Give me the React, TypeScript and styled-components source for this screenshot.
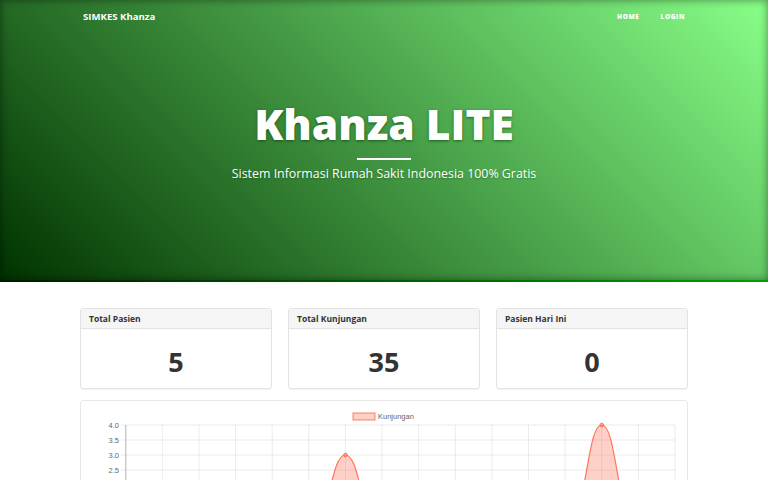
import React from "react";
import styled, { createGlobalStyle } from "styled-components";

const GlobalStyle = createGlobalStyle`
  html, body {
    margin: 0;
    padding: 0;
    background: #fff;
  }
  body {
    font-family: "Open Sans", "Liberation Sans", sans-serif;
    color: #333;
  }
  * {
    box-sizing: border-box;
  }
`;

const Hero = styled.header`
  display: flex;
  flex-direction: column;
  height: 282px;
  background: linear-gradient(45deg, #003300, #88ff88);
  box-shadow: inset 0 0 8px rgba(0, 0, 0, 0.45);
  border-bottom: 2px solid;
  border-image: linear-gradient(to right, #001800, #00a000) 1;
`;

const Nav = styled.nav`
  display: flex;
  justify-content: space-between;
  align-items: center;
  width: 608px;
  height: 32px;
  margin: 0 auto;
  padding: 0 3px;
`;

const Brand = styled.a`
  font-size: 9.6px;
  font-weight: 700;
  color: #fff;
  text-decoration: none;
`;

const NavLinks = styled.ul`
  display: flex;
  gap: 21px;
  margin: 0;
  padding: 0;
  list-style: none;
`;

const NavLink = styled.li`
  font-size: 6.5px;
  font-weight: 800;
  letter-spacing: 0.6px;
  text-transform: uppercase;
  color: #fff;
`;

const HeroBody = styled.div`
  display: flex;
  flex-direction: column;
  align-items: center;
  padding-top: 71px;
  color: #fff;
`;

const HeroTitle = styled.h1`
  margin: 0;
  font-size: 42.5px;
  line-height: 1;
  font-weight: 800;
  text-shadow: 0 1px 3px rgba(0, 70, 0, 0.7);
`;

const Divider = styled.hr`
  width: 54px;
  height: 2px;
  margin: 12px 0 0;
  border: 0;
  background: #fff;
`;

const HeroSubtitle = styled.p`
  margin: 4px 0 0;
  font-size: 12.4px;
  line-height: 20px;
  font-weight: 400;
  text-shadow: 0 1px 2px rgba(0, 60, 0, 0.4);
`;

const Main = styled.main`
  width: 608px;
  margin: 0 auto;
  padding-top: 26px;
`;

const CardGrid = styled.div`
  display: grid;
  grid-template-columns: repeat(3, 1fr);
  gap: 16px;
`;

const Card = styled.div`
  border: 1px solid #e3e3e3;
  border-radius: 3px;
  background: #fff;
  box-shadow: 0 1px 1px rgba(0, 0, 0, 0.05);
  overflow: hidden;
`;

const CardHeader = styled.div`
  height: 20px;
  padding: 0 8px;
  display: flex;
  align-items: center;
  background: #f5f5f5;
  border-bottom: 1px solid #e3e3e3;
  font-size: 8.5px;
  font-weight: 700;
  color: #333;
`;

const CardValue = styled.div`
  display: flex;
  justify-content: center;
  align-items: center;
  height: 59px;
  padding-top: 6px;
  font-size: 27px;
  font-weight: 700;
  color: #333;
`;

const ChartPanel = styled.div`
  margin-top: 11px;
  border: 1px solid #e8e8e8;
  border-radius: 3px;
  background: #fff;
`;

const ChartSvg = styled.svg`
  display: block;
  width: 100%;
  height: 180px;
`;

const labels = [
  "01", "02", "03", "04", "05", "06", "07", "08",
  "09", "10", "11", "12", "13", "14", "15", "16",
];
const data = [0, 0, 0, 0, 0, 0, 3, 0, 0, 0, 0, 0, 0, 4, 0, 0];

const X0 = 44.7;
const STEP = 36.62;
const Y_TOP = 24;
const UNIT = 30;
const MAX = 4;

type Pt = { x: number; y: number };

// chart.js style spline, tension 0.4
function buildPath(points: Pt[]) {
  const t = 0.4;
  const cps = points.map((cur, i) => {
    const prev = points[i - 1] || cur;
    const next = points[i + 1] || cur;
    const d01 = Math.hypot(cur.x - prev.x, cur.y - prev.y);
    const d12 = Math.hypot(next.x - cur.x, next.y - cur.y);
    const sum = d01 + d12 || 1;
    const fa = (t * d01) / sum;
    const fb = (t * d12) / sum;
    return {
      prev: { x: cur.x - fa * (next.x - prev.x), y: cur.y - fa * (next.y - prev.y) },
      next: { x: cur.x + fb * (next.x - prev.x), y: cur.y + fb * (next.y - prev.y) },
    };
  });
  let d = `M${points[0].x},${points[0].y}`;
  for (let i = 1; i < points.length; i++) {
    const a = cps[i - 1].next;
    const b = cps[i].prev;
    const p = points[i];
    d += ` C${a.x},${a.y} ${b.x},${b.y} ${p.x},${p.y}`;
  }
  return d;
}

function VisitChart() {
  const yOf = (v: number) => Y_TOP + (MAX - v) * UNIT;
  const points = data.map((v, i) => ({ x: X0 + i * STEP, y: yOf(v) }));
  const line = buildPath(points);
  const last = points[points.length - 1];
  const area = `${line} L${last.x},${yOf(0)} L${points[0].x},${yOf(0)} Z`;
  const ticks = [4, 3.5, 3, 2.5, 2, 1.5, 1, 0.5, 0];

  return (
    <ChartSvg viewBox="0 0 606 180">
      <rect x={272} y={12} width={22} height={7} fill="rgba(255,99,71,0.3)" stroke="rgba(255,99,71,0.8)" strokeWidth={1} />
      <text x={297} y={18} fontSize={7.5} fill="#666" fontFamily="Liberation Sans, sans-serif">
        Kunjungan
      </text>
      {ticks.map((v) => (
        <g key={v}>
          <line x1={40} x2={last.x} y1={yOf(v)} y2={yOf(v)} stroke={v === 0 ? "rgba(0,0,0,0.25)" : "rgba(0,0,0,0.08)"} strokeWidth={1} />
          <text x={38} y={yOf(v) + 2.5} fontSize={7.5} fill="#666" textAnchor="end" fontFamily="Liberation Sans, sans-serif">
            {v.toFixed(1)}
          </text>
        </g>
      ))}
      {labels.map((l, i) => (
        <g key={l}>
          <line x1={X0 + i * STEP} x2={X0 + i * STEP} y1={Y_TOP} y2={yOf(0) + 4} stroke={i === 0 ? "rgba(0,0,0,0.2)" : "rgba(0,0,0,0.08)"} strokeWidth={i === 0 ? 1.5 : 1} />
          <text x={X0 + i * STEP} y={yOf(0) + 13} fontSize={7.5} fill="#666" textAnchor="middle" fontFamily="Liberation Sans, sans-serif">
            {l}
          </text>
        </g>
      ))}
      <path d={area} fill="rgba(255,99,71,0.3)" />
      <path d={line} fill="none" stroke="rgba(255,99,71,0.85)" strokeWidth={1.2} />
      {points.map((p, i) => (
        <circle key={i} cx={p.x} cy={p.y} r={1.8} fill="rgba(255,99,71,0.3)" stroke="rgba(255,99,71,0.9)" strokeWidth={1} />
      ))}
    </ChartSvg>
  );
}

const stats = [
  { title: "Total Pasien", value: 5 },
  { title: "Total Kunjungan", value: 35 },
  { title: "Pasien Hari Ini", value: 0 },
];

export default function App() {
  return (
    <>
      <GlobalStyle />
      <Hero>
        <Nav>
          <Brand href="#">SIMKES Khanza</Brand>
          <NavLinks>
            <NavLink>Home</NavLink>
            <NavLink>Login</NavLink>
          </NavLinks>
        </Nav>
        <HeroBody>
          <HeroTitle>Khanza LITE</HeroTitle>
          <Divider />
          <HeroSubtitle>Sistem Informasi Rumah Sakit Indonesia 100% Gratis</HeroSubtitle>
        </HeroBody>
      </Hero>
      <Main>
        <CardGrid>
          {stats.map((s) => (
            <Card key={s.title}>
              <CardHeader>{s.title}</CardHeader>
              <CardValue>{s.value}</CardValue>
            </Card>
          ))}
        </CardGrid>
        <ChartPanel>
          <VisitChart />
        </ChartPanel>
      </Main>
    </>
  );
}
